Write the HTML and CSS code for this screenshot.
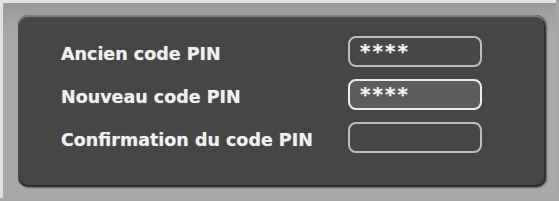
FILE: index.html
```html
<!DOCTYPE html>
<html lang="fr">
<head>
  <meta charset="UTF-8" />
  <title>Code PIN</title>
  <link rel="stylesheet" href="styles.css">
</head>
<body>
  <div class="screen">
    <div class="panel">
      <div class="label">Ancien code PIN</div>
      <div class="field">****</div>

      <div class="label">Nouveau code PIN</div>
      <div class="field active">****</div>

      <div class="label">Confirmation du code PIN</div>
      <div class="field"></div>
    </div>
  </div>
</body>
</html>
```

FILE: styles.css
```css
html, body {
  margin: 0;
  padding: 0;
  background: #a6a6a6;
}

.screen {
  width: 556px;
  height: 198px;
  border-top: 3px solid #e2e2e2;
  border-left: 3px solid #e2e2e2;
  padding: 12px 0 0 15px;
  box-sizing: border-box;
  background: linear-gradient(#9a9a9a, #a8a8a8 30px);
}

.panel {
  width: 528px;
  height: 172px;
  box-sizing: border-box;
  padding: 21px 64px 0 43px;
  background: #464646;
  border-radius: 10px;
  box-shadow: inset 0 2px 1px #808080, inset -2px 0 1px #2e2e2e, inset 0 -2px 1px #2e2e2e, 1px 1px 2px rgba(0, 0, 0, 0.4);
  display: grid;
  grid-template-columns: 1fr 134px;
  grid-auto-rows: 31px;
  row-gap: 12px;
  align-items: center;
  font-family: 'DejaVu Sans', Verdana, sans-serif;
}

.label {
  color: #f0f0f0;
  font-size: 17.5px;
  font-weight: bold;
  padding-top: 4px;
  text-shadow: 0 0 1px rgba(255, 255, 255, 0.5);
}

.field {
  height: 31px;
  box-sizing: border-box;
  border: 2px solid #bdbdbd;
  border-radius: 8px;
  background: #474747;
  color: #f4f4f4;
  font-size: 20px;
  font-weight: bold;
  letter-spacing: 2px;
  line-height: 26px;
  padding-left: 10px;
  text-shadow: 0 0 1px rgba(255, 255, 255, 0.6);
}

.field.active {
  border-color: #ececec;
  background: #5c5c5c;
}
```
